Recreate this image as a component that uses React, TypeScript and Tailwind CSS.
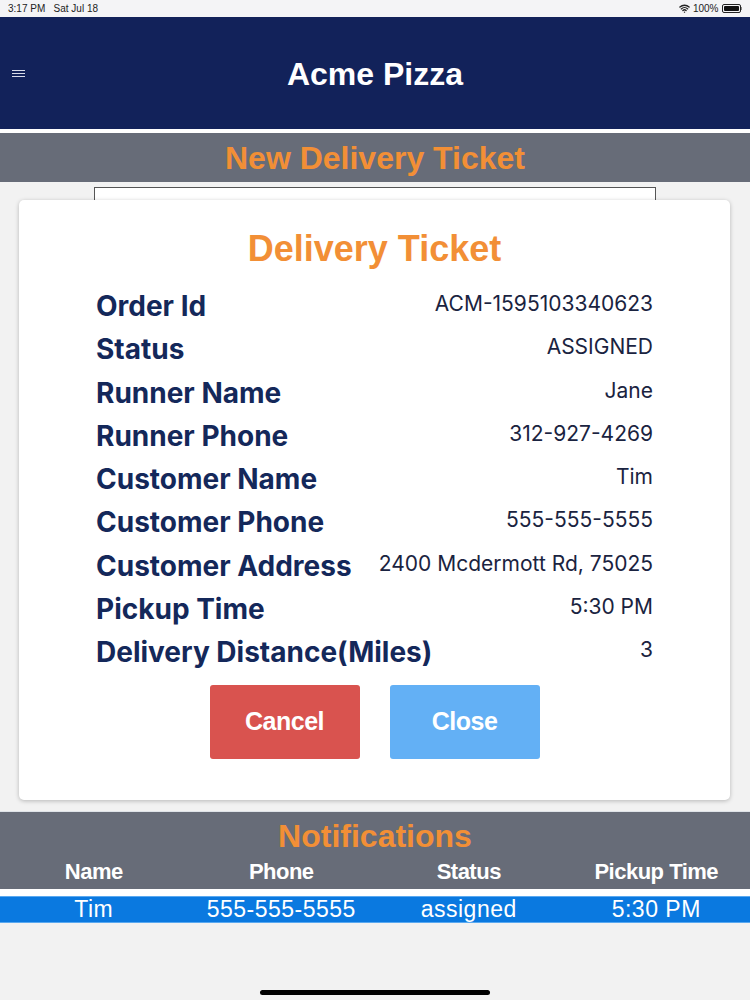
import { Wifi } from "lucide-react";

const ticket: [string, string][] = [
  ["Order Id", "ACM-1595103340623"],
  ["Status", "ASSIGNED"],
  ["Runner Name", "Jane"],
  ["Runner Phone", "312-927-4269"],
  ["Customer Name", "Tim"],
  ["Customer Phone", "555-555-5555"],
  ["Customer Address", "2400 Mcdermott Rd, 75025"],
  ["Pickup Time", "5:30 PM"],
  ["Delivery Distance(Miles)", "3"],
];

const columns = ["Name", "Phone", "Status", "Pickup Time"];
const rows = [["Tim", "555-555-5555", "assigned", "5:30 PM"]];

export default function App() {
  return (
    <div className="w-[750px] h-[1000px] bg-[#f2f2f2] flex flex-col overflow-hidden font-['Liberation_Sans',Arial,sans-serif]">
      {/* Status bar */}
      <div className="h-[17px] bg-[#f4f4f6] flex items-center justify-between px-[8px] text-[10px] text-[#222]">
        <span>3:17 PM&nbsp;&nbsp;&nbsp;Sat Jul 18</span>
        <div className="flex items-center gap-[3px]">
          <Wifi className="w-[11px] h-[11px]" strokeWidth={3} />
          <span>100%</span>
          <div className="flex items-center">
            <div className="w-[19px] h-[9px] rounded-[2px] border border-[#222] p-[1px]">
              <div className="w-full h-full bg-[#111] rounded-[1px]" />
            </div>
            <div className="w-[1.5px] h-[3px] bg-[#888]" />
          </div>
        </div>
      </div>

      {/* Header */}
      <div className="h-[116px] bg-[#12225a] border-b-4 border-white flex items-center relative">
        <div className="absolute left-[12px] top-[53px] flex flex-col gap-[2px]">
          <div className="w-[13px] h-[1px] bg-[#d8dcea]" />
          <div className="w-[13px] h-[1px] bg-[#d8dcea]" />
          <div className="w-[13px] h-[1px] bg-[#d8dcea]" />
        </div>
        <h1 className="w-full text-center text-white font-bold text-[32px] leading-none mt-[1px]">
          Acme Pizza
        </h1>
      </div>

      {/* Page title */}
      <div className="h-[49px] bg-[#676c78] flex items-center justify-center">
        <h2 className="text-[#f28f36] font-bold text-[32px] leading-none">New Delivery Ticket</h2>
      </div>

      {/* Content with modal */}
      <div className="h-[629px] relative">
        <div className="ml-[94px] mt-[5px] w-[562px] h-[60px] bg-white border border-[#555]" />

        {/* Modal card */}
        <div className="absolute left-[19px] top-[18px] w-[711px] h-[600px] bg-white rounded-[5px] shadow-[0_1px_4px_rgba(0,0,0,0.25)] px-[77px] pt-[29px] flex flex-col">
          <h3 className="text-center text-[#f28f36] font-bold text-[36px] leading-[40px]">Delivery Ticket</h3>
          <div className="mt-[16px] flex flex-col">
            {ticket.map(([label, value]) => (
              <div key={label} className="h-[43.3px] flex items-start justify-between">
                <span className="font-['Inter',sans-serif] font-bold text-[28px] leading-[43px] text-[#14285a] whitespace-nowrap">
                  {label}
                </span>
                <span className="font-['Inter',sans-serif] text-[21px] leading-[37px] text-[#1a2340] whitespace-nowrap">
                  {value}
                </span>
              </div>
            ))}
          </div>
          <div className="mt-[10px] flex justify-center gap-[30px]">
            <button className="w-[150px] h-[74px] rounded-[3px] bg-[#d9534f] text-white font-bold text-[25px] tracking-[-0.5px]">
              Cancel
            </button>
            <button className="w-[150px] h-[74px] rounded-[3px] bg-[#63b0f5] text-white font-bold text-[25px] tracking-[-0.5px]">
              Close
            </button>
          </div>
        </div>
      </div>

      {/* Notifications */}
      <div className="h-[78px] bg-[#676c78] border-t border-[#dfe3e8] flex flex-col items-center">
        <h2 className="text-[#f28f36] font-bold text-[32px] leading-none mt-[8px]">Notifications</h2>
        <div className="w-full grid grid-cols-4 mt-[7px]">
          {columns.map((c) => (
            <span key={c} className="text-center text-white font-bold text-[22px] leading-[26px] tracking-[-0.5px]">
              {c}
            </span>
          ))}
        </div>
      </div>
      <div className="h-[7px] bg-white" />
      {rows.map((r, i) => (
        <div
          key={i}
          className="h-[27px] bg-[#0a79e0] border-y border-[#5aa9f0] grid grid-cols-4 items-center"
        >
          {r.map((cell, j) => (
            <span key={j} className="text-center text-white text-[23px] leading-none tracking-[0.5px]">
              {cell}
            </span>
          ))}
        </div>
      ))}

      {/* Home indicator */}
      <div className="flex-1 flex items-end justify-center pb-[5px]">
        <div className="w-[230px] h-[5px] rounded-full bg-black" />
      </div>
    </div>
  );
}
